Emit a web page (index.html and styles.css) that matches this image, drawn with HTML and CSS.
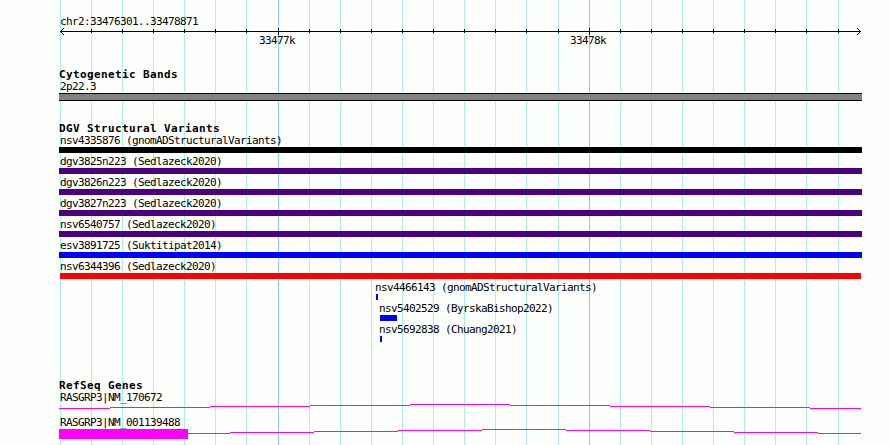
FILE: index.html
```
<!DOCTYPE html>
<html lang="en">
<head>
  <meta charset="UTF-8">
  <title>chr2:33476301..33478871</title>
  <link rel="stylesheet" href="styles.css">
</head>
<body>
  <svg class="grid" width="890" height="445" shape-rendering="crispEdges">
    <path class="minor" d="M60.5 0V445M91.5 0V445M122.5 0V445M153.5 0V445M184.5 0V445M215.5 0V445M246.5 0V445M309.5 0V445M340.5 0V445M371.5 0V445M402.5 0V445M433.5 0V445M464.5 0V445M495.5 0V445M526.5 0V445M558.5 0V445M620.5 0V445M651.5 0V445M682.5 0V445M713.5 0V445M744.5 0V445M775.5 0V445M806.5 0V445M838.5 0V445"/>
    <path class="major" d="M278.5 0V445M589.5 0V445"/>
  </svg>

  <main class="tracks">
    <section class="ruler">
      <div class="label">chr2:33476301..33478871</div>
      <svg class="axis" width="803" height="8" viewBox="59 27 803 8" shape-rendering="crispEdges">
        <path d="M60 31.5H861"/>
        <path d="M91.5 29V33M122.5 29V33M153.5 29V33M184.5 29V33M215.5 29V33M246.5 29V33M309.5 29V33M340.5 29V33M371.5 29V33M402.5 29V33M433.5 29V33M464.5 29V33M495.5 29V33M526.5 29V33M558.5 29V33M620.5 29V33M651.5 29V33M682.5 29V33M713.5 29V33M744.5 29V33M775.5 29V33M806.5 29V33M838.5 29V33"/>
        <path d="M278.5 28V35M589.5 28V35"/>
        <path d="M61 30.5h1M62 29.5h1M63 28.5h1M61 32.5h1M62 33.5h1M63 34.5h1M859 30.5h1M858 29.5h1M857 28.5h1M859 32.5h1M858 33.5h1M857 34.5h1"/>
      </svg>
      <div class="ticks">
        <span class="label">33477k</span>
        <span class="label">33478k</span>
      </div>
    </section>

    <section class="track cyto">
      <h2>Cytogenetic Bands</h2>
      <div class="label">2p22.3</div>
      <div class="band"></div>
    </section>

    <section class="track variants">
      <h2>DGV Structural Variants</h2>
      <div class="feature"><div class="label">nsv4335876 (gnomADStructuralVariants)</div><div class="bar black"></div></div>
      <div class="feature"><div class="label">dgv3825n223 (Sedlazeck2020)</div><div class="bar purple"></div></div>
      <div class="feature"><div class="label">dgv3826n223 (Sedlazeck2020)</div><div class="bar purple"></div></div>
      <div class="feature"><div class="label">dgv3827n223 (Sedlazeck2020)</div><div class="bar purple"></div></div>
      <div class="feature"><div class="label">nsv6540757 (Sedlazeck2020)</div><div class="bar purple"></div></div>
      <div class="feature"><div class="label">esv3891725 (Suktitipat2014)</div><div class="bar blue"></div></div>
      <div class="feature"><div class="label">nsv6344396 (Sedlazeck2020)</div><div class="bar red"></div></div>
      <div class="feature" style="margin-left: 315px"><div class="label">nsv4466143 (gnomADStructuralVariants)</div><div class="bar blue" style="width: 2px; margin-left: 2px"></div></div>
      <div class="feature" style="margin-left: 319px"><div class="label">nsv5402529 (ByrskaBishop2022)</div><div class="bar blue" style="width: 17px; margin-left: 2px"></div></div>
      <div class="feature" style="margin-left: 319px"><div class="label">nsv5692838 (Chuang2021)</div><div class="bar blue" style="width: 2px; margin-left: 2px"></div></div>
    </section>

    <section class="track genes">
      <h2>RefSeq Genes</h2>
      <div class="label">RASGRP3|NM_170672</div>
      <svg class="gene" width="803" height="13" viewBox="59 403 803 13" shape-rendering="crispEdges">
        <path d="M59 408.5H110M110 407.5H210M210 406.5H310M310 405.5H410M410 404.5H510M510 405.5H610M610 406.5H710M710 407.5H810M810 408.5H861"/>
      </svg>
      <div class="label">RASGRP3|NM_001139488</div>
      <svg class="gene" width="803" height="12" viewBox="59 428 803 12" shape-rendering="crispEdges">
        <rect x="59" y="429" width="129" height="10"/>
        <path d="M188 433.5H230M230 432.5H314M314 431.5H398M398 430.5H482M482 429.5H566M566 430.5H650M650 431.5H734M734 432.5H818M818 433.5H861"/>
      </svg>
    </section>
  </main>
</body>
</html>
```

FILE: styles.css
```
body {
  margin: 0;
  width: 890px;
  height: 445px;
  overflow: hidden;
  background: #fdfffc;
  color: #000;
  font-family: "DejaVu Sans Mono", monospace;
  font-size: 11px;
  line-height: 14px;
}
.grid {
  position: absolute;
  top: 0;
  left: 0;
}
.grid path {
  fill: none;
}
.minor {
  stroke: #afeeee;
}
.major {
  stroke: #87ceeb;
}
.tracks {
  position: relative;
  width: 803px;
  padding: 15px 0 0 59px;
}
h2 {
  margin: 0;
  height: 12px;
  font-size: 11px;
  line-height: 14px;
  letter-spacing: 0.38px;
  white-space: nowrap;
}
.label {
  height: 12px;
  padding-left: 1px;
  letter-spacing: -0.62px;
  white-space: nowrap;
}
.axis, .gene {
  display: block;
}
.axis path {
  stroke: #000;
  fill: none;
}
.ticks {
  display: flex;
  gap: 274px;
  height: 12px;
  margin-top: -1px;
  padding-left: 199px;
}
.ticks .label {
  width: 36px;
}
.cyto {
  margin-top: 22px;
}
.band {
  box-sizing: border-box;
  height: 8px;
  margin-top: 1px;
  border-top: 1px solid #000;
  border-bottom: 1px solid #000;
  background: #848084;
}
.variants {
  margin-top: 21px;
}
.feature {
  height: 21px;
}
.bar {
  height: 6px;
  margin-top: 1px;
}
.black {
  background: #000;
}
.purple {
  background: #4b0082;
}
.blue {
  background: #00f;
}
.red {
  margin: 1px 1px 0;
  background: #f00;
}
.genes {
  margin-top: 35px;
}
.gene path {
  stroke: #f0f;
  fill: none;
}
.gene rect {
  fill: #f0f;
}
```
